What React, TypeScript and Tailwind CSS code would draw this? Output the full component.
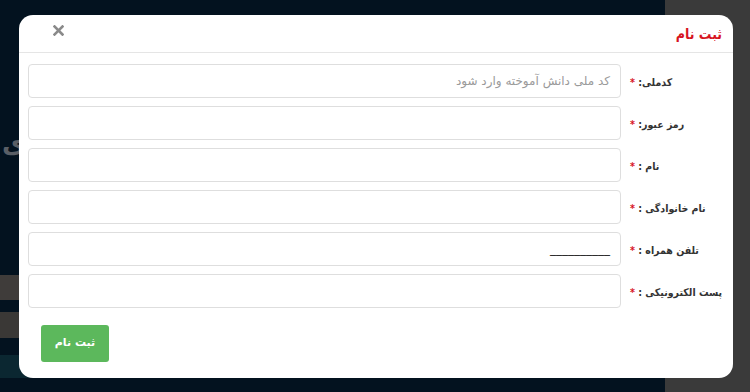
import React from "react";

const fields = [
  { label: "کدملی:", placeholder: "کد ملی دانش آموخته وارد شود", value: "" },
  { label: "رمز عبور:", placeholder: "", value: "" },
  { label: "نام :", placeholder: "", value: "" },
  { label: "نام خانوادگی :", placeholder: "", value: "" },
  { label: "تلفن همراه :", placeholder: "", value: "__________" },
  { label: "پست الکترونیکی :", placeholder: "", value: "" },
];

export default function App() {
  return (
    <div
      className="relative w-[750px] h-[392px] overflow-hidden flex"
      style={{ fontFamily: '"DejaVu Sans", "Noto Sans", sans-serif' }}
    >
      <div className="w-[665px] h-full bg-[#03121f] flex flex-col">
        <div className="h-[128px]" />
        <div className="text-[#5a5f66] text-[26px] font-bold leading-[30px] pl-[2px]">ی</div>
        <div className="h-[117px]" />
        <div className="h-[25px] bg-[#3f3c3a]" />
        <div className="h-[12px]" />
        <div className="h-[26px] bg-[#3a3836]" />
        <div className="h-[17px]" />
        <div className="h-[23px] bg-[#0b2731]" />
        <div className="flex-1" />
      </div>
      <div className="flex-1 h-full bg-[#3a3a3a]" />

      <div
        dir="rtl"
        className="absolute left-[19px] top-[15px] w-[714px] h-[363px] bg-white rounded-[14px] flex flex-col"
      >
        <div className="h-[38px] border-b border-[#e5e5e5] flex items-center justify-between pr-[11px] pl-[34px]">
          <div className="text-[#d7141f] font-bold text-[14px] leading-none font-['DejaVu_Sans_Condensed','DejaVu_Sans',sans-serif]">ثبت نام</div>
          <svg width="11" height="11" viewBox="0 0 11 11" className="mt-[-6px]">
            <path d="M1.5 1.5 L9.5 9.5 M9.5 1.5 L1.5 9.5" stroke="#8a8a8a" strokeWidth="2.6" strokeLinecap="square" />
          </svg>
        </div>
        <div className="flex flex-col gap-[8px] pt-[11px] pl-[9px]">
          {fields.map((f) => (
            <div key={f.label} className="flex items-center h-[34px]">
              <div
                className="w-[112px] shrink-0 text-left pl-[9px] text-[10.5px] font-bold text-[#333] leading-none pt-[3px] whitespace-nowrap font-['DejaVu_Sans_Condensed','DejaVu_Sans',sans-serif]"
              >
                {f.label} <span className="text-[#d7141f]">*</span>
              </div>
              <div className="w-[593px] h-[34px] border border-[#dedede] rounded-[4px] flex items-center pr-[10px] pl-[12px] text-[12px]">
                {f.placeholder ? (
                  <span className="text-[#9a9a9a]">{f.placeholder}</span>
                ) : (
                  <span className="text-[#222]">{f.value}</span>
                )}
              </div>
            </div>
          ))}
        </div>
        <div className="flex justify-end pl-[22px] mt-[17px]">
          <div className="w-[68px] h-[37px] bg-[#5cb85c] rounded-[3px] flex items-center justify-center text-white font-bold text-[11px]">
            ثبت نام
          </div>
        </div>
      </div>
    </div>
  );
}
